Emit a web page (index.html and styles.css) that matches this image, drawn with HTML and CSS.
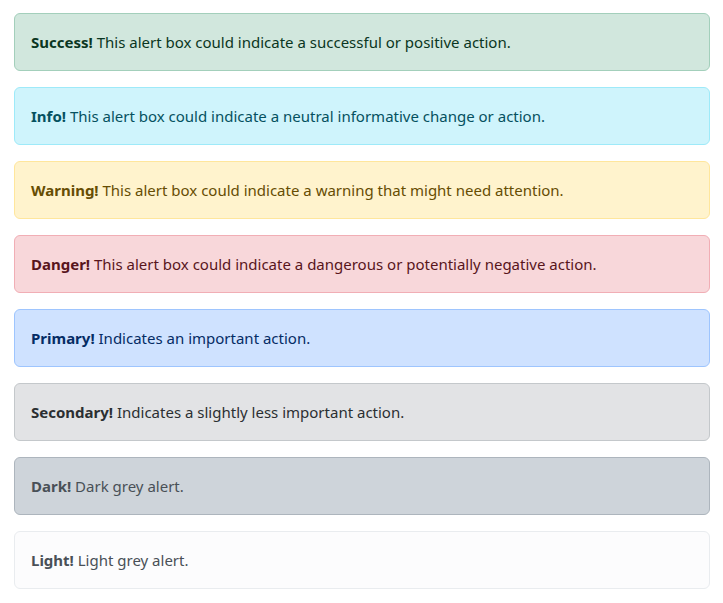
FILE: index.html
```html
<!DOCTYPE html>
<html lang="en">
<head>
<meta charset="utf-8">
<title>Alerts</title>
<link rel="stylesheet" href="styles.css">
</head>
<body>
<div class="container">
  <div class="alert alert-success"><strong>Success!</strong> This alert box could indicate a successful or positive action.</div>
  <div class="alert alert-info"><strong>Info!</strong> This alert box could indicate a neutral informative change or action.</div>
  <div class="alert alert-warning"><strong>Warning!</strong> This alert box could indicate a warning that might need attention.</div>
  <div class="alert alert-danger"><strong>Danger!</strong> This alert box could indicate a dangerous or potentially negative action.</div>
  <div class="alert alert-primary"><strong>Primary!</strong> Indicates an important action.</div>
  <div class="alert alert-secondary"><strong>Secondary!</strong> Indicates a slightly less important action.</div>
  <div class="alert alert-dark"><strong>Dark!</strong> Dark grey alert.</div>
  <div class="alert alert-light"><strong>Light!</strong> Light grey alert.</div>
</div>
</body>
</html>
```
FILE: styles.css
```css
html, body {
  margin: 0;
  padding: 0;
  background: #fff;
}
body {
  font-family: "Noto Sans", "Open Sans", sans-serif;
  font-size: 15px;
  line-height: 24px;
  color: #212529;
}
.container {
  padding: 13px 13px 0 14px;
}
.alert {
  padding: 16px;
  margin-bottom: 16px;
  border: 1px solid transparent;
  border-radius: 6px;
}
.alert strong { font-weight: 700; }
.alert-success { background: #d1e7dd; border-color: #a3cfbb; color: #0a3622; }
.alert-info { background: #cff4fc; border-color: #9eeaf9; color: #055160; }
.alert-warning { background: #fff3cd; border-color: #ffe69c; color: #664d03; }
.alert-danger { background: #f8d7da; border-color: #f1aeb5; color: #58151c; }
.alert-primary { background: #cfe2ff; border-color: #9ec5fe; color: #052c65; }
.alert-secondary { background: #e2e3e5; border-color: #c4c8cb; color: #2b2f32; }
.alert-dark { background: #ced4da; border-color: #adb5bd; color: #495057; }
.alert-light { background: #fcfcfd; border-color: #e9ecef; color: #495057; }
```
